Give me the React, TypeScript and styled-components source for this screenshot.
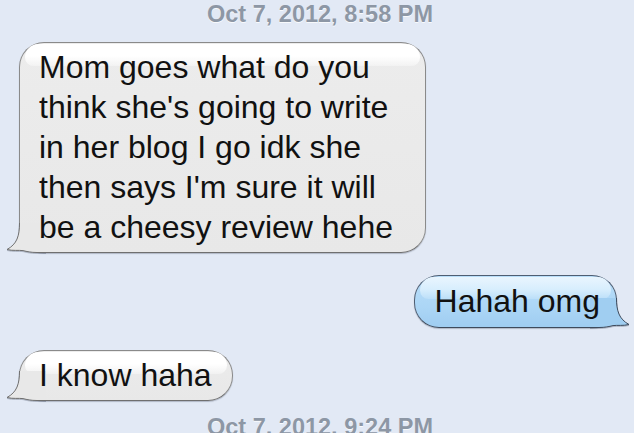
import styled, { createGlobalStyle } from "styled-components";

type Side = "them" | "me";

const GlobalStyle = createGlobalStyle`
  html, body {
    margin: 0;
    padding: 0;
    background: #e2e9f5;
    overflow: hidden;
  }
  body {
    font-family: "Liberation Sans", Arial, sans-serif;
  }
`;

const palette = {
  them: {
    base: "linear-gradient(to bottom, #ececec 0%, #e8e8e8 100%)",
    gloss: "linear-gradient(to bottom, #ffffff 0%, #ffffff 55%, rgba(255,255,255,0.35) 100%)",
    border: "#8a8a8a",
    bottomBorder: "#6f6f6f",
    tail: "#e8e8e8",
  },
  me: {
    base: "linear-gradient(to bottom, #b9def9 0%, #acd6f6 60%, #9fcdf1 100%)",
    gloss: "linear-gradient(to bottom, #e9f5fe 0%, #d8eefd 55%, rgba(216,238,253,0.3) 100%)",
    border: "#4f5e72",
    bottomBorder: "#3e4b5c",
    tail: "#a0cef1",
  },
};

const Thread = styled.div`
  display: flex;
  flex-direction: column;
  width: 634px;
  height: 433px;
`;

const Timestamp = styled.div<{ $gap: number }>`
  margin-top: ${(p) => p.$gap}px;
  padding-left: 6px;
  text-align: center;
  font-size: 23.5px;
  line-height: 28px;
  font-weight: 700;
  color: #8d97a5;
  text-shadow: 0 1px 0 rgba(255, 255, 255, 0.8);
  white-space: nowrap;
`;

const Row = styled.div<{ $side: Side; $gap: number }>`
  display: flex;
  justify-content: ${(p) => (p.$side === "me" ? "flex-end" : "flex-start")};
  margin-top: ${(p) => p.$gap}px;
  padding: ${(p) => (p.$side === "me" ? "0 17px 0 0" : "0 0 0 19px")};
`;

const Bubble = styled.div<{ $side: Side }>`
  position: relative;
  box-sizing: border-box;
  max-width: 407px;
  padding: ${(p) => (p.$side === "me" ? "5px 16px 6px 20px" : "4px 20px 5px 19px")};
  border: 1px solid ${(p) => palette[p.$side].border};
  border-bottom-color: ${(p) => palette[p.$side].bottomBorder};
  border-radius: 25px;
  background: ${(p) => palette[p.$side].base};
  box-shadow: 0 1px 1px rgba(60, 70, 90, 0.3);
  font-size: 32px;
  line-height: 40px;
  color: #111;

  &::before {
    content: "";
    position: absolute;
    top: 1px;
    left: 5px;
    right: 5px;
    height: 22px;
    border-radius: 22px 22px 14px 14px;
    background: ${(p) => palette[p.$side].gloss};
  }
`;

const Text = styled.span`
  position: relative;
  z-index: 1;
`;

const TailSvg = styled.svg<{ $side: Side }>`
  position: absolute;
  bottom: -1px;
  ${(p) => (p.$side === "me" ? "right: -14px;" : "left: -14px;")}
  width: 40px;
  height: 30px;
  overflow: visible;
  transform: ${(p) => (p.$side === "me" ? "scaleX(-1)" : "none")};
  filter: drop-shadow(0 1px 0.6px rgba(60, 70, 90, 0.3));
`;

const Tail = ({ side }: { side: Side }) => {
  const c = palette[side];
  return (
    <TailSvg $side={side} viewBox="0 0 40 30">
      <path
        d="M13.5,0 C13.5,13 11,21 1,26.5 C7,28 12.5,27 17,27.6 C21,28.6 25,29.5 31,29.5 L40,29.5 L40,0 Z"
        fill={c.tail}
      />
      <path
        d="M13.5,0 C13.5,13 11,21 1,26.5 C7,28 12.5,27 17,27.6 C21,28.6 25,29.5 31,29.5 L40,29.5"
        fill="none"
        stroke={c.bottomBorder}
        strokeWidth={1}
      />
    </TailSvg>
  );
};

const messages: { side: Side; text: string; gap: number }[] = [
  {
    side: "them",
    text: "Mom goes what do you think she's going to write in her blog I go idk she then says I'm sure it will be a cheesy review hehe",
    gap: 14,
  },
  { side: "me", text: "Hahah omg", gap: 22 },
  { side: "them", text: "I know haha", gap: 22 },
];

export default function App() {
  return (
    <>
      <GlobalStyle />
      <Thread>
        <Timestamp $gap={0}>Oct 7, 2012, 8:58 PM</Timestamp>
        {messages.map((m, i) => (
          <Row key={i} $side={m.side} $gap={m.gap}>
            <Bubble $side={m.side}>
              <Tail side={m.side} />
              <Text>{m.text}</Text>
            </Bubble>
          </Row>
        ))}
        <Timestamp $gap={12}>Oct 7, 2012, 9:24 PM</Timestamp>
      </Thread>
    </>
  );
}
